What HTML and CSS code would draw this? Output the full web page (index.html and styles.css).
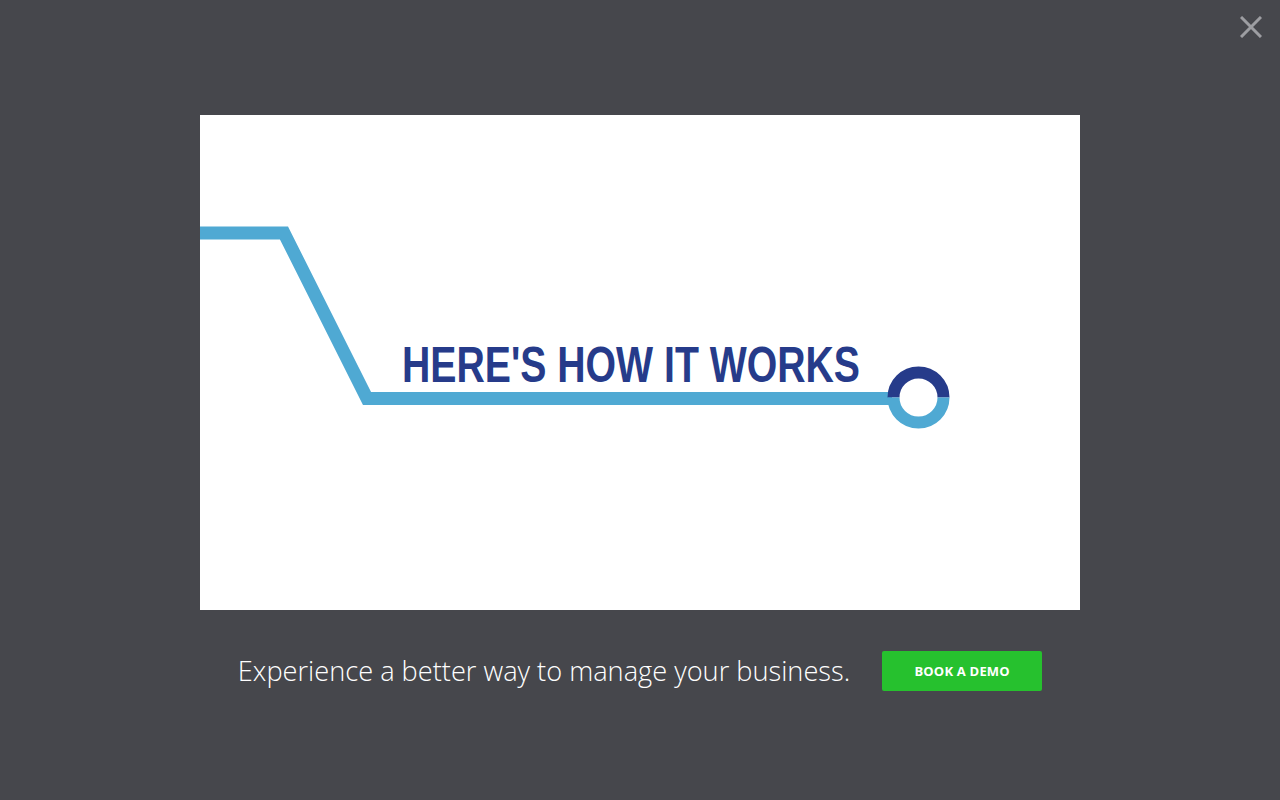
FILE: index.html
```html
<!DOCTYPE html>
<html lang="en">
<head>
<meta charset="utf-8">
<title>Here's how it works</title>
<link rel="stylesheet" href="styles.css">
</head>
<body>
<div class="overlay">
  <button class="close" aria-label="Close">
    <svg width="22" height="22" viewBox="0 0 22 22"><path d="M1 1 L21 21 M21 1 L1 21" stroke="#9d9ea2" stroke-width="3" fill="none"/></svg>
  </button>
  <main class="modal">
    <div class="video">
      <svg class="art" width="880" height="495" viewBox="0 0 880 495">
        <polyline points="0,118 84,118 167,283.5 692,283.5" fill="none" stroke="#4fa9d3" stroke-width="13" stroke-linejoin="miter"/>
        <path d="M693.5 282.5 A25 25 0 0 1 743.5 282.5" fill="none" stroke="#263b8a" stroke-width="12"/>
        <path d="M693.5 282.5 A25 25 0 0 0 743.5 282.5" fill="none" stroke="#4fa9d3" stroke-width="12"/>
        <text x="202" y="267" textLength="458" lengthAdjust="spacingAndGlyphs" class="headline">HERE'S HOW IT WORKS</text>
      </svg>
    </div>
    <div class="cta">
      <p class="caption">Experience a better way to manage your business.</p>
      <a class="btn" href="#">BOOK A DEMO</a>
    </div>
  </main>
</div>
</body>
</html>
```
FILE: styles.css
```css
html, body {
  margin: 0;
  padding: 0;
  height: 100%;
}
body {
  background: #46474c;
  font-family: "Open Sans", "Liberation Sans", sans-serif;
}
.overlay {
  position: relative;
  width: 1280px;
  height: 800px;
}
.close {
  position: absolute;
  top: 16px;
  right: 18px;
  width: 22px;
  height: 22px;
  padding: 0;
  border: 0;
  background: none;
  cursor: pointer;
}
.close svg {
  display: block;
}
.modal {
  display: flex;
  flex-direction: column;
  align-items: center;
  padding-top: 115px;
}
.video {
  width: 880px;
  height: 495px;
  background: #ffffff;
}
.art {
  display: block;
}
.headline {
  font-family: "Liberation Sans", Arial, sans-serif;
  font-weight: 700;
  font-size: 50px;
  fill: #263b8a;
}
.cta {
  display: flex;
  align-items: center;
  gap: 32px;
  margin-top: 41px;
  height: 40px;
}
.caption {
  margin: 0;
  color: #ffffff;
  font-weight: 300;
  font-size: 27.2px;
  line-height: 40px;
}
.btn {
  display: flex;
  align-items: center;
  justify-content: center;
  width: 160px;
  height: 40px;
  background: #26c12e;
  border-radius: 2px;
  color: #ffffff;
  font-weight: 700;
  font-size: 13px;
  text-decoration: none;
  letter-spacing: 0.2px;
}
```
